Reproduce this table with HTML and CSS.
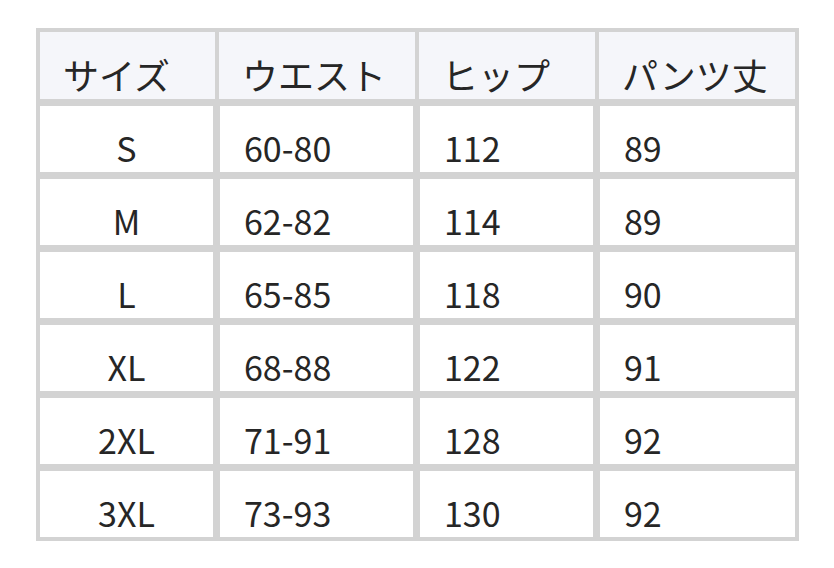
FILE: index.html
```html
<!DOCTYPE html>
<html lang="ja">
<head>
<meta charset="utf-8">
<link rel="stylesheet" href="styles.css">
</head>
<body>
<div class="size-table">
  <div class="row head">
    <div class="cell">サイズ</div>
    <div class="cell">ウエスト</div>
    <div class="cell">ヒップ</div>
    <div class="cell">パンツ丈</div>
  </div>
  <div class="row body"><div class="cell center">S</div><div class="cell">60-80</div><div class="cell">112</div><div class="cell">89</div></div>
  <div class="row body"><div class="cell center">M</div><div class="cell">62-82</div><div class="cell">114</div><div class="cell">89</div></div>
  <div class="row body"><div class="cell center">L</div><div class="cell">65-85</div><div class="cell">118</div><div class="cell">90</div></div>
  <div class="row body"><div class="cell center">XL</div><div class="cell">68-88</div><div class="cell">122</div><div class="cell">91</div></div>
  <div class="row body"><div class="cell center">2XL</div><div class="cell">71-91</div><div class="cell">128</div><div class="cell">92</div></div>
  <div class="row body"><div class="cell center">3XL</div><div class="cell">73-93</div><div class="cell">130</div><div class="cell">92</div></div>
</div>
</body>
</html>
```
FILE: styles.css
```css
html, body {
  margin: 0;
  padding: 0;
  background: #ffffff;
}
body {
  padding: 28px 0 0 36px;
  font-family: "Noto Sans CJK JP", "Noto Sans", sans-serif;
  color: #262626;
}
.size-table {
  width: 755px;
  border: 4px solid #d3d3d3;
  background: #d3d3d3;
  display: flex;
  flex-direction: column;
  gap: 7px;
}
.row {
  display: grid;
}
.head {
  grid-template-columns: 175px 196px 176px 196px;
  column-gap: 4px;
  height: 67px;
}
.body {
  grid-template-columns: 173px 193px 173px 195px;
  column-gap: 7px;
  height: 66px;
}
.cell {
  background: #ffffff;
  font-size: 34px;
  line-height: 1;
  padding: 25px 0 0 24px;
  box-sizing: border-box;
}
.head .cell {
  background: #f5f6fa;
  padding-top: 24px;
  font-size: 36px;
  padding-left: 23px;
}
.center {
  text-align: center;
  padding-left: 0;
}
```
